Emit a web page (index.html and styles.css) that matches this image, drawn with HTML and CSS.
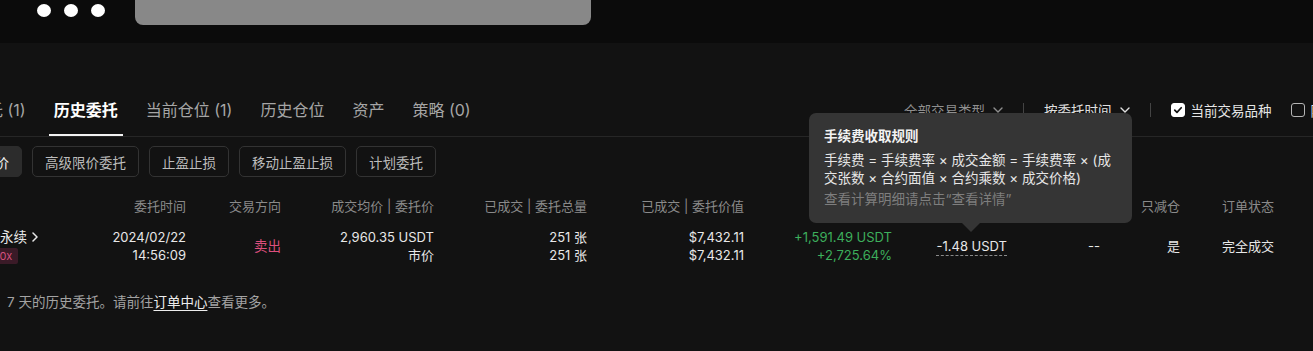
FILE: index.html
```html
<!DOCTYPE html>
<html lang="zh-CN">
<head>
<meta charset="utf-8">
<title>历史委托</title>
<link rel="stylesheet" href="styles.css">
</head>
<body>
<div class="topbar">
  <div class="dots"><span></span><span></span><span></span></div>
  <div class="urlbar"></div>
</div>
<main class="content">
  <div class="tabs-row">
    <nav class="tabs">
      <span class="tab">当前委托 (1)</span>
      <span class="tab active">历史委托</span>
      <span class="tab">当前仓位 (1)</span>
      <span class="tab">历史仓位</span>
      <span class="tab">资产</span>
      <span class="tab">策略 (0)</span>
    </nav>
    <div class="tools">
      <span class="select muted">全部交易类型
        <svg class="chev" viewBox="0 0 10 6" width="10" height="6"><path d="M1 1l4 4 4-4" fill="none" stroke="currentColor" stroke-width="1.4" stroke-linecap="round" stroke-linejoin="round"/></svg>
      </span>
      <span class="divider"></span>
      <span class="select">按委托时间
        <svg class="chev" viewBox="0 0 10 6" width="10" height="6"><path d="M1 1l4 4 4-4" fill="none" stroke="currentColor" stroke-width="1.4" stroke-linecap="round" stroke-linejoin="round"/></svg>
      </span>
      <span class="divider"></span>
      <label class="check"><span class="box checked"><svg viewBox="0 0 14 14" width="14" height="14"><path d="M3.2 7.2l2.6 2.6 5-5.4" fill="none" stroke="#111" stroke-width="2" stroke-linecap="round" stroke-linejoin="round"/></svg></span>当前交易品种</label>
      <label class="check"><span class="box"></span>隐藏已撤销</label>
    </div>
  </div>

  <div class="filters">
    <span class="fbtn active">限价</span>
    <span class="fbtn">高级限价委托</span>
    <span class="fbtn">止盈止损</span>
    <span class="fbtn">移动止盈止损</span>
    <span class="fbtn">计划委托</span>
  </div>

  <div class="table">
    <div class="grid thead">
      <div class="c-left"></div>
      <div>委托时间</div>
      <div>交易方向</div>
      <div>成交均价 | 委托价</div>
      <div>已成交 | 委托总量</div>
      <div>已成交 | 委托价值</div>
      <div>收益</div>
      <div>手续费</div>
      <div>止盈止损</div>
      <div>只减仓</div>
      <div>订单状态</div>
    </div>
    <div class="grid tbody">
      <div class="c-left sym">
        <span class="sym-name">永续<svg class="arrow" viewBox="0 0 6 10" width="6" height="10"><path d="M1 1l4 4-4 4" fill="none" stroke="currentColor" stroke-width="1.5" stroke-linecap="round" stroke-linejoin="round"/></svg></span>
        <span class="badge-clip"><span class="badge">100x</span></span>
      </div>
      <div class="two"><span>2024/02/22</span><span>14:56:09</span></div>
      <div class="mid sell">卖出</div>
      <div class="two"><span>2,960.35 USDT</span><span>市价</span></div>
      <div class="two"><span>251 张</span><span>251 张</span></div>
      <div class="two"><span>$7,432.11</span><span>$7,432.11</span></div>
      <div class="two up"><span>+1,591.49 USDT</span><span>+2,725.64%</span></div>
      <div class="mid"><span class="fee">-1.48 USDT</span></div>
      <div class="mid">--</div>
      <div class="mid">是</div>
      <div class="mid">完全成交</div>
    </div>
  </div>

  <p class="footer">7 天的历史委托。请前往<a class="link">订单中心</a>查看更多。</p>
</main>

<div class="tooltip">
  <div class="tt-title">手续费收取规则</div>
  <div class="tt-line">手续费 = 手续费率 × 成交金额 = 手续费率 × (成<br>交张数 × 合约面值 × 合约乘数 × 成交价格)</div>
  <div class="tt-hint">查看计算明细请点击“查看详情”</div>
</div>
</body>
</html>
```

FILE: styles.css
```css
* { box-sizing: border-box; }
html, body { margin: 0; padding: 0; }
body {
  width: 1313px;
  height: 351px;
  overflow: hidden;
  background: #121212;
  color: #e8e8e8;
  font-family: Inter, "Noto Sans CJK SC", "Noto Sans", sans-serif;
  position: relative;
}

/* top window bar */
.topbar {
  height: 43px;
  background: #0b0b0b;
  display: flex;
  align-items: flex-start;
}
.dots {
  display: flex;
  gap: 13px;
  padding: 4px 0 0 37px;
}
.dots span {
  width: 14px;
  height: 13px;
  border-radius: 50%;
  background: #fff;
}
.urlbar {
  margin-left: 30px;
  width: 456px;
  height: 25px;
  background: #888888;
  border-radius: 0 0 8px 8px;
}

.content {
  padding-top: 55px;
}

/* tabs */
.tabs-row {
  display: flex;
  align-items: flex-start;
  margin-left: -66px;
  margin-right: -84px;
  border-bottom: 1px solid #262626;
}
.tabs {
  display: flex;
  gap: 18px;
}
.tab {
  font-size: 16px;
  line-height: 24px;
  padding: 0 5px 12px;
  border-bottom: 2px solid transparent;
  color: #a6a6a6;
  white-space: nowrap;
}
.tab.active {
  color: #fff;
  font-weight: 600;
  border-bottom-color: #f2f2f2;
}
.tools {
  margin-left: auto;
  display: flex;
  align-items: center;
  height: 24px;
  font-size: 13.5px;
  white-space: nowrap;
}
.select {
  display: flex;
  align-items: center;
  gap: 8px;
  color: #e0e0e0;
}
.select.muted { color: #8f8f8f; }
.chev { display: block; }
.divider {
  width: 1px;
  height: 14px;
  background: #444;
  margin: 0 20px;
}
.check {
  display: flex;
  align-items: center;
  gap: 6px;
  color: #e6e6e6;
  margin-right: 19px;
}
.box {
  width: 14px;
  height: 14px;
  border-radius: 3px;
  border: 1.5px solid #b5b5b5;
  display: flex;
  align-items: center;
  justify-content: center;
}
.box.checked {
  background: #fff;
  border-color: #fff;
}
.box svg { display: block; }

/* filter buttons */
.filters {
  display: flex;
  gap: 10px;
  margin: 9px 0 0 -31px;
}
.fbtn {
  height: 31px;
  padding: 0 12px;
  display: flex;
  align-items: center;
  border: 1px solid #333;
  border-radius: 5px;
  font-size: 13.5px;
  color: #bcbcbc;
  white-space: nowrap;
}
.fbtn.active {
  background: #2c2c2c;
  border-color: #2c2c2c;
  color: #f2f2f2;
}

/* table */
.table { margin-top: 19px; }
.grid {
  display: grid;
  grid-template-columns: 86px 100px 95px 153px 153px 157px 148px 115px 93px 80px 94px;
  font-size: 13px;
  text-align: right;
  white-space: nowrap;
}
.thead {
  line-height: 20px;
  color: #8a8a8a;
}
.tbody {
  margin-top: 12px;
  line-height: 18px;
  color: #e8e8e8;
}
.c-left { text-align: left; }
.two {
  display: flex;
  flex-direction: column;
  align-items: flex-end;
}
.mid {
  display: flex;
  align-items: center;
  justify-content: flex-end;
}
.sym {
  display: flex;
  flex-direction: column;
  align-items: flex-start;
}
.sym-name {
  display: flex;
  align-items: center;
  gap: 5px;
  font-size: 13.5px;
}
.arrow { display: block; }
.badge-clip {
  display: flex;
  margin-top: 2px;
  overflow: hidden;
}
.badge {
  margin-left: -16px;
  height: 16px;
  line-height: 16px;
  padding: 0 6px 0 4px;
  font-size: 11px;
  background: #3a1a27;
  color: #d24f7c;
  border-radius: 2px;
}
.sell { color: #dc4f7c; font-size: 13.5px; }
.up { color: #3daf5c; }
.fee {
  line-height: 18px;
  border-bottom: 1px dashed #8a8a8a;
}

/* footer */
.footer {
  margin: 28px 0 0;
  padding-left: 7px;
  font-size: 13.5px;
  line-height: 20px;
  color: #a3a3a3;
}
.link {
  color: #ededed;
  text-decoration: underline;
  text-underline-offset: 3px;
}

/* tooltip overlay */
.tooltip {
  position: absolute;
  left: 809px;
  top: 113px;
  width: 323px;
  padding: 13px 15px 15px;
  background: #353535;
  border-radius: 7px;
  font-size: 13.5px;
  color: #e6e6e6;
}
.tooltip::after {
  content: "";
  position: absolute;
  left: 153px;
  bottom: -9px;
  border-left: 9px solid transparent;
  border-right: 9px solid transparent;
  border-top: 9px solid #353535;
}
.tt-title {
  line-height: 20px;
  font-weight: 600;
  color: #f2f2f2;
}
.tt-line {
  margin-top: 5px;
  line-height: 18px;
}
.tt-hint {
  margin-top: 3px;
  line-height: 18px;
  color: #7e7e7e;
}
```
